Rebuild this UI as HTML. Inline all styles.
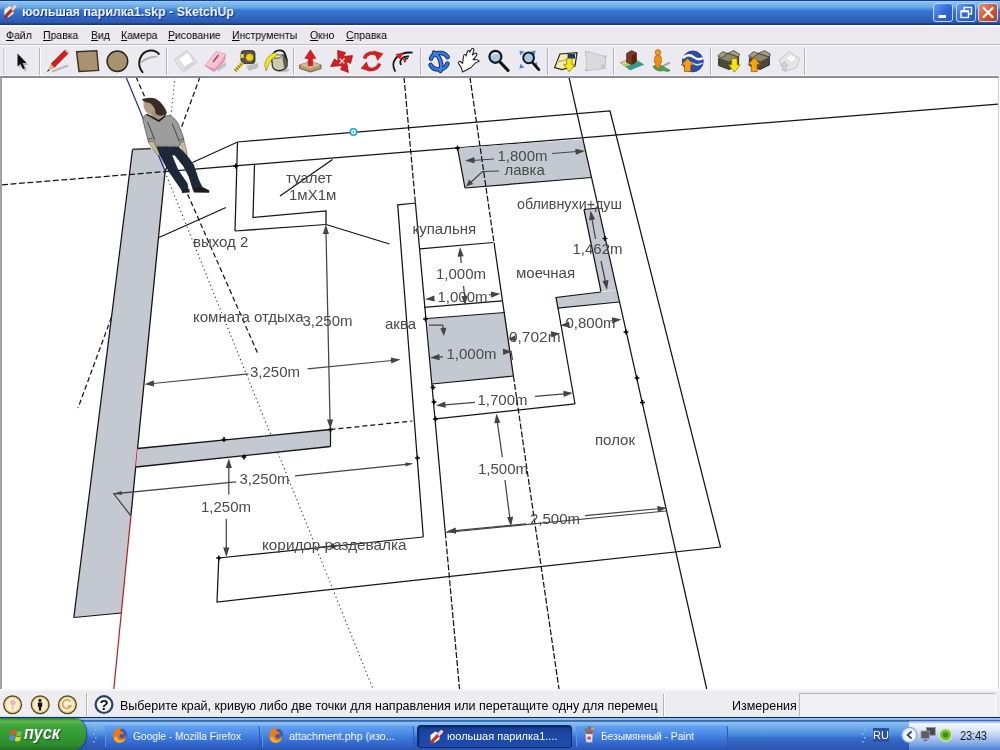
<!DOCTYPE html>
<html><head><meta charset="utf-8"><title>SketchUp</title>
<style>
*{box-sizing:border-box;margin:0;padding:0}
span,b,.ru{will-change:transform}
html,body{width:1000px;height:750px;overflow:hidden;background:#fff;font-family:"Liberation Sans",sans-serif}
#title{position:absolute;left:0;top:0;width:1000px;height:25px;background:linear-gradient(#14408c 0,#14408c 3%,#9acaff 5%,#88c0f0 9%,#78b4e6 20%,#64a4e6 30%,#4488dc 38%,#3478d0 44%,#3470c4 60%,#3060bc 76%,#2c58ae 92%,#183c84 95%,#163880 100%)}
#title .t{position:absolute;left:22px;top:4px;transform:scaleX(0.955);transform-origin:0 0;color:#fff;font-weight:bold;font-size:13px;text-shadow:1px 1px 1px #0a2a80;white-space:nowrap}
.wb{position:absolute;top:3px;width:20px;height:19px;border:1px solid #c4d6f6;border-radius:3px;background:linear-gradient(135deg,#6a9ef2,#2d66da 55%,#2358cc)}
#menu{position:absolute;left:0;top:25px;width:1000px;height:20px;background:#ece9ee;border-top:2px solid #fbfbfd;border-bottom:1px solid #bdbcc2;font-size:11px;color:#000}
#menu span{position:absolute;top:2px;white-space:nowrap;transform:scaleX(0.95);transform-origin:0 0}
#tool{position:absolute;left:0;top:45px;width:1000px;height:31px;background:#ebeaf0;border-top:1px solid #fff;border-bottom:1px solid #fafafc}
#canvas{position:absolute;left:0;top:76px;width:999px;height:613px;background:#fff;border-left:2px solid #a2a2a6;border-top:2px solid #8e8e92;border-right:1px solid #cfcfd3}
#status{position:absolute;left:0;top:689px;width:1000px;height:28px;background:#edecf1;border-top:2px solid #f6f5f9;font-size:12.5px;color:#000}
#status span{position:absolute;white-space:nowrap;top:8px}
#task{position:absolute;left:0;top:716px;width:1000px;height:34px;background:linear-gradient(#dfe6f2 0,#dfe6f2 1.5%,#0c2c5c 2.5%,#0c2c5c 4.4%,#98bce4 5%,#98bce4 10.5%,#3c6cb0 11.5%,#3c6cb0 16%,#88c0f4 17.5%,#84bcf2 23%,#7ab4ec 27%,#60a0e4 41%,#4888dc 56%,#3470cc 65%,#3060bc 80%,#2c54b0 100%)}
#start{position:absolute;left:0;top:2px;width:86px;height:32px;border-radius:0 12px 12px 0/0 16px 16px 0;background:linear-gradient(#2f7f2c 0,#5cba52 10%,#3ea43a 25%,#339a32 55%,#2c8c2c 85%,#236f22 100%);box-shadow:1px 0 2px #123a7c}
#start b{position:absolute;left:24px;top:4px;color:#fff;font-style:italic;font-size:19px;transform:scaleX(0.85);transform-origin:0 0;text-shadow:1px 1px 1px #1a4a18}
.tb{position:absolute;top:9px;height:23px;border-radius:3px;background:linear-gradient(#62a0ee 0,#4f8fe8 30%,#3c78da 60%,#2c5ec6 100%);border:1px solid #2c5cbc;border-top-color:#76acf2;border-left-color:#5c94e4;color:#fff;font-size:11px;white-space:nowrap;overflow:hidden}
.tb span{position:absolute;top:4px;transform-origin:0 0}
.tb.act{background:linear-gradient(#183c8c,#1c48a4 40%,#1e4cae);border-color:#102c70;box-shadow:inset 1px 1px 2px #0c2460}
#tray{position:absolute;left:909px;top:5px;width:91px;height:29px;background:linear-gradient(#7fa4e4 0,#f2f6fd 10%,#dfe9fa 30%,#b4ccf2 55%,#7ea6e6 80%,#4e82d8 100%);font-size:12px;color:#111}
</style></head><body>
<div id="title"><span class="t">юольшая парилка1.skp - SketchUp</span>
<div class="wb" style="left:933px"></div><div class="wb" style="left:956px"></div><div class="wb" style="left:978px;background:linear-gradient(135deg,#ea9070,#d4552c 55%,#b83a18)"></div>
</div>
<div id="menu"><span style="left:6px"><u>Ф</u>айл</span><span style="left:43px"><u>П</u>равка</span><span style="left:91px"><u>В</u>ид</span><span style="left:121px"><u>К</u>амера</span><span style="left:168px"><u>Р</u>исование</span><span style="left:232px"><u>И</u>нструменты</span><span style="left:310px"><u>О</u>кно</span><span style="left:346px"><u>С</u>правка</span></div>
<div id="tool"></div>
<div id="canvas"></div>
<div id="status"><span id="st1" style="left:120px;width:539px;overflow:hidden">Выберите край, кривую либо две точки для направления или перетащите одну для перемец</span><span id="st2" style="left:732px">Измерения</span>
<div style="position:absolute;left:663px;top:3px;width:2px;height:24px;border-left:1px solid #b4b3ba;border-right:1px solid #fff"></div>
<div style="position:absolute;left:799px;top:2px;width:197px;height:25px;background:#f1f0f4;border:1px solid #b9b8be;border-right-color:#fff;border-bottom-color:#fff"></div>
</div>
<div id="task">
<div id="start"><b>пуск</b></div>
<div class="tb" style="left:105px;width:155px"><span style="left:27px;transform:scaleX(0.93)">Google - Mozilla Firefox</span></div>
<div class="tb" style="left:262px;width:152px"><span style="left:26px;transform:scaleX(0.97)">attachment.php (изо...</span></div>
<div class="tb act" style="left:417px;width:155px"><span style="left:29px">юольшая парилка1....</span></div>
<div class="tb" style="left:576px;width:152px"><span style="left:24px;transform:scaleX(0.925)">Безымянный - Paint</span></div>
<div class="ru" style="position:absolute;left:873px;top:12px;width:16px;height:14px;background:#2c4fa8;color:#fff;font-size:11px;line-height:14px;text-align:center">RU</div>
<div id="tray"><span style="position:absolute;left:51px;top:8px;transform:scaleX(0.9);transform-origin:0 0">23:43</span></div>
</div>
<svg width="1000" height="750" viewBox="0 0 1000 750" style="position:absolute;left:0;top:0;will-change:transform" font-family="Liberation Sans, sans-serif">
<defs><clipPath id="cv"><rect x="2" y="78" width="996" height="611"/></clipPath></defs>
<g clip-path="url(#cv)">
<line x1="165.0" y1="172.0" x2="373.0" y2="689.0" stroke="#333" stroke-width="1.1" stroke-dasharray="1.2 3"/>
<line x1="175.0" y1="77.0" x2="165.0" y2="172.0" stroke="#444" stroke-width="1.1" stroke-dasharray="1.2 3"/>
<line x1="200.0" y1="77.0" x2="78.0" y2="408.0" stroke="#141414" stroke-width="1.25" stroke-dasharray="5 3"/>
<line x1="136.0" y1="77.0" x2="258.0" y2="354.0" stroke="#141414" stroke-width="1.25" stroke-dasharray="5 3"/>
<polygon points="132.5,149.5 163.0,149.0 165.0,172.0 121.3,613.0 73.8,617.5" fill="#c4c9d1"/>
<line x1="132.5" y1="149.5" x2="73.8" y2="617.5" stroke="#141414" stroke-width="1.25"/>
<line x1="73.8" y1="617.5" x2="121.3" y2="613.0" stroke="#141414" stroke-width="1.25"/>
<line x1="132.5" y1="149.3" x2="151.0" y2="148.6" stroke="#4a4a4a" stroke-width="1.8"/>
<line x1="165.0" y1="172.0" x2="137.6" y2="448.0" stroke="#141414" stroke-width="1.3"/>
<line x1="137.6" y1="448.0" x2="135.7" y2="467.0" stroke="#c01818" stroke-width="1.25"/>
<line x1="135.7" y1="467.0" x2="131.0" y2="515.0" stroke="#141414" stroke-width="1.3"/>
<line x1="131.0" y1="515.0" x2="113.8" y2="689.0" stroke="#c01818" stroke-width="1.2"/>
<line x1="126.0" y1="77.0" x2="165.0" y2="171.0" stroke="#1f2a8c" stroke-width="1.2"/>
<line x1="2.0" y1="184.8" x2="165.0" y2="171.6" stroke="#141414" stroke-width="1.25" stroke-dasharray="6 2.5"/>
<line x1="165.0" y1="171.6" x2="998.0" y2="104.0" stroke="#141414" stroke-width="1.25"/>
<polygon points="137.5,448.5 330.5,429.5 330.5,446.5 136.0,467.0" fill="#c4c9d1"/>
<line x1="137.5" y1="448.5" x2="330.5" y2="429.5" stroke="#141414" stroke-width="1.3"/>
<line x1="330.5" y1="429.5" x2="330.5" y2="446.5" stroke="#141414" stroke-width="1.25"/>
<line x1="330.5" y1="446.5" x2="136.0" y2="467.0" stroke="#141414" stroke-width="1.3"/>
<line x1="330.5" y1="429.5" x2="412.5" y2="421.0" stroke="#141414" stroke-width="1.25" stroke-dasharray="5 3"/>
<path d="M221.6 439.5h4.8M224.0 437.1v4.8" stroke="#000" stroke-width="1.5"/>
<path d="M241.6 457.0h4.8M244.0 454.6v4.8" stroke="#000" stroke-width="1.5"/>
<path d="M328.1 429.5h4.8M330.5 427.1v4.8" stroke="#000" stroke-width="1.5"/>
<polyline points="192.5,162.5 237.5,142.0 610.0,111.0 720.5,547.0 217.0,602.0 218.8,558.0 423.2,537.0" fill="none" stroke="#141414" stroke-width="1.25"/>
<line x1="237.5" y1="142.0" x2="235.0" y2="231.0" stroke="#141414" stroke-width="1.25"/>
<line x1="235.0" y1="231.0" x2="326.0" y2="224.5" stroke="#141414" stroke-width="1.25"/>
<line x1="326.0" y1="224.5" x2="389.5" y2="244.0" stroke="#141414" stroke-width="1.25"/>
<polyline points="254.5,164.5 253.0,217.5 326.0,211.0 326.0,224.5" fill="none" stroke="#141414" stroke-width="1.25"/>
<line x1="280.0" y1="196.0" x2="332.5" y2="159.5" stroke="#141414" stroke-width="1.25"/>
<line x1="159.0" y1="237.5" x2="226.0" y2="207.5" stroke="#141414" stroke-width="1.25"/>
<path d="M233.3 166.0h4.8M235.7 163.6v4.8" stroke="#000" stroke-width="1.5"/>
<circle cx="353.5" cy="132" r="3.2" fill="#fff" stroke="#18a8d8" stroke-width="1.6"/><circle cx="353.5" cy="132" r="0.9" fill="#18a8d8"/>
<polygon points="457.5,148.0 583.0,139.3 591.5,177.5 465.0,188.0" fill="#c4c9d1"/>
<line x1="457.5" y1="148.0" x2="465.0" y2="188.0" stroke="#141414" stroke-width="1.25"/>
<line x1="465.0" y1="188.0" x2="591.5" y2="177.5" stroke="#141414" stroke-width="1.25"/>
<path d="M455.1 148.0h4.8M457.5 145.6v4.8" stroke="#000" stroke-width="1.5"/>
<polygon points="584.0,209.5 598.0,208.0 616.5,290.0 601.0,291.5" fill="#c4c9d1"/>
<line x1="584.0" y1="209.5" x2="601.0" y2="291.5" stroke="#141414" stroke-width="1.25"/>
<line x1="584.0" y1="209.5" x2="598.0" y2="208.0" stroke="#141414" stroke-width="1.25"/>
<polygon points="556.0,297.5 616.5,290.3 619.0,302.0 558.0,308.0" fill="#c4c9d1"/>
<polyline points="601.0,292.0 556.0,297.5 558.0,308.0 619.0,302.0" fill="none" stroke="#141414" stroke-width="1.25"/>
<line x1="558.0" y1="308.0" x2="575.0" y2="404.0" stroke="#141414" stroke-width="1.25"/>
<polygon points="427.0,318.5 505.0,312.5 513.5,376.0 432.0,384.0" fill="#c4c9d1"/>
<line x1="427.0" y1="318.5" x2="505.0" y2="312.5" stroke="#141414" stroke-width="1.25"/>
<line x1="432.0" y1="384.0" x2="513.5" y2="376.0" stroke="#141414" stroke-width="1.25"/>
<path d="M423.1 319.0h4.8M425.5 316.6v4.8" stroke="#000" stroke-width="1.5"/>
<line x1="404.0" y1="77.0" x2="415.4" y2="203.0" stroke="#141414" stroke-width="1.25" stroke-dasharray="6 2"/>
<line x1="415.4" y1="203.0" x2="445.3" y2="532.5" stroke="#141414" stroke-width="1.25"/>
<line x1="445.3" y1="532.5" x2="459.5" y2="689.0" stroke="#141414" stroke-width="1.25" stroke-dasharray="6 2"/>
<line x1="469.9" y1="77.0" x2="494.0" y2="242.5" stroke="#141414" stroke-width="1.25" stroke-dasharray="6 2"/>
<line x1="494.0" y1="242.5" x2="513.4" y2="376.0" stroke="#141414" stroke-width="1.25"/>
<line x1="513.4" y1="376.0" x2="559.0" y2="689.0" stroke="#141414" stroke-width="1.25" stroke-dasharray="6 2"/>
<line x1="568.9" y1="77.0" x2="706.7" y2="689.0" stroke="#141414" stroke-width="1.25"/>
<path d="M602.6 238.5h4.8M605.0 236.1v4.8" stroke="#000" stroke-width="1.5"/>
<path d="M623.6 332.0h4.8M626.0 329.6v4.8" stroke="#000" stroke-width="1.5"/>
<path d="M634.6 378.0h4.8M637.0 375.6v4.8" stroke="#000" stroke-width="1.5"/>
<path d="M640.1 402.5h4.8M642.5 400.1v4.8" stroke="#000" stroke-width="1.5"/>
<polyline points="416.0,203.0 397.7,204.8 423.3,537.0" fill="none" stroke="#141414" stroke-width="1.25"/>
<path d="M415.1 458.0h4.8M417.5 455.6v4.8" stroke="#000" stroke-width="1.5"/>
<line x1="420.0" y1="248.8" x2="493.0" y2="242.5" stroke="#141414" stroke-width="1.25"/>
<line x1="424.0" y1="307.4" x2="502.0" y2="300.8" stroke="#141414" stroke-width="1.25"/>
<line x1="435.5" y1="418.8" x2="575.0" y2="403.8" stroke="#141414" stroke-width="1.25"/>
<path d="M430.6 387.5h4.8M433.0 385.1v4.8" stroke="#000" stroke-width="1.5"/>
<path d="M431.6 402.0h4.8M434.0 399.6v4.8" stroke="#000" stroke-width="1.5"/>
<path d="M433.1 419.0h4.8M435.5 416.6v4.8" stroke="#000" stroke-width="1.5"/>
<polygon points="465.0,160.8 474.3,157.0 474.7,163.2" fill="#444"/>
<line x1="472.0" y1="160.5" x2="494.0" y2="159.0" stroke="#444" stroke-width="1.25"/>
<line x1="552.0" y1="153.5" x2="577.0" y2="151.5" stroke="#444" stroke-width="1.25"/>
<polygon points="585.0,151.0 575.8,154.8 575.3,148.7" fill="#444"/>
<text x="497.5" y="161" font-size="15" fill="#4a4a4a">1,800m</text>
<polyline points="499.0,171.0 482.5,171.5 470.0,183.0" fill="none" stroke="#444" stroke-width="1.25"/>
<polygon points="466.0,186.5 469.1,179.5 473.3,184.1" fill="#444"/>
<text x="504.5" y="175" font-size="15" fill="#4a4a4a">лавка</text>
<polygon points="590.5,210.5 595.2,219.3 589.1,220.4" fill="#444"/>
<line x1="592.0" y1="219.0" x2="595.5" y2="239.0" stroke="#444" stroke-width="1.25"/>
<line x1="601.0" y1="261.0" x2="605.5" y2="282.0" stroke="#444" stroke-width="1.25"/>
<polygon points="607.0,290.0 602.4,281.1 608.5,280.1" fill="#444"/>
<text x="572.5" y="254" font-size="15" fill="#4a4a4a">1,462m</text>
<polygon points="560.0,325.5 569.1,321.5 569.8,327.6" fill="#444"/>
<polygon points="621.5,319.5 612.3,323.5 611.8,317.3" fill="#444"/>
<text x="565.5" y="328" font-size="15" fill="#4a4a4a">0,800m</text>
<polygon points="508.5,339.0 515.2,335.3 515.7,341.5" fill="#444"/>
<polygon points="560.5,333.5 551.3,337.5 550.7,331.3" fill="#444"/>
<text x="509" y="342.3" font-size="15" fill="#4a4a4a" textLength="51.5" lengthAdjust="spacingAndGlyphs">0,702m</text>
<polygon points="460.0,247.0 463.7,256.3 457.5,256.7" fill="#444"/>
<line x1="460.6" y1="255.0" x2="461.2" y2="263.0" stroke="#444" stroke-width="1.25"/>
<line x1="463.5" y1="286.0" x2="464.8" y2="297.0" stroke="#444" stroke-width="1.25"/>
<polygon points="465.2,305.5 461.4,296.3 467.6,295.8" fill="#444"/>
<text x="436" y="278.75" font-size="15" fill="#4a4a4a">1,000m</text>
<polygon points="425.0,299.3 434.2,295.4 434.7,301.6" fill="#444"/>
<polygon points="500.5,293.8 491.3,297.7 490.8,291.5" fill="#444"/>
<line x1="489.0" y1="294.8" x2="492.0" y2="294.5" stroke="#444" stroke-width="1.25"/>
<text x="437.5" y="302" font-size="15" fill="#4a4a4a">1,000m</text>
<polyline points="429.0,325.0 442.5,325.0 443.3,328.0" fill="none" stroke="#444" stroke-width="1.25"/>
<polygon points="444.0,336.0 440.2,328.3 446.4,327.8" fill="#444"/>
<polygon points="430.0,357.8 439.3,354.1 439.7,360.3" fill="#444"/>
<line x1="438.0" y1="357.2" x2="443.0" y2="356.8" stroke="#444" stroke-width="1.25"/>
<polygon points="512.5,351.3 503.2,354.9 502.8,348.7" fill="#444"/>
<line x1="511.0" y1="351.0" x2="512.5" y2="360.0" stroke="#444" stroke-width="1.25"/>
<text x="446.5" y="359.3" font-size="15" fill="#4a4a4a">1,000m</text>
<text x="385" y="328.75" font-size="15" fill="#4a4a4a">аква</text>
<polygon points="436.0,405.5 445.2,401.6 445.7,407.8" fill="#444"/>
<line x1="445.0" y1="404.8" x2="475.0" y2="402.3" stroke="#444" stroke-width="1.25"/>
<line x1="535.0" y1="396.3" x2="564.0" y2="393.8" stroke="#444" stroke-width="1.25"/>
<polygon points="573.0,393.0 563.8,396.9 563.3,390.8" fill="#444"/>
<text x="477.5" y="404.5" font-size="15" fill="#4a4a4a">1,700m</text>
<polygon points="496.5,413.5 500.4,422.7 494.3,423.2" fill="#444"/>
<line x1="497.3" y1="422.0" x2="502.3" y2="457.0" stroke="#444" stroke-width="1.25"/>
<line x1="505.0" y1="480.0" x2="509.8" y2="518.0" stroke="#444" stroke-width="1.25"/>
<polygon points="511.0,526.5 507.1,517.3 513.2,516.8" fill="#444"/>
<text x="478" y="474.3" font-size="15" fill="#4a4a4a">1,500m</text>
<line x1="446.0" y1="532.5" x2="666.0" y2="511.0" stroke="#444" stroke-width="1.25"/>
<line x1="585.0" y1="515.7" x2="666.0" y2="508.0" stroke="#444" stroke-width="1.25"/>
<polygon points="446.5,531.5 455.7,527.5 456.2,533.7" fill="#444"/>
<line x1="455.0" y1="530.7" x2="526.0" y2="523.8" stroke="#444" stroke-width="1.25"/>
<polygon points="667.0,508.0 657.9,512.0 657.2,505.9" fill="#444"/>
<text x="530" y="523.75" font-size="15" fill="#4a4a4a">2,500m</text>
<polygon points="325.8,224.5 329.0,234.0 322.8,234.0" fill="#444"/>
<line x1="326.0" y1="232.0" x2="330.0" y2="420.0" stroke="#444" stroke-width="1.25"/>
<polygon points="330.3,429.0 327.0,419.6 333.2,419.4" fill="#444"/>
<text x="302.5" y="325.5" font-size="15" fill="#4a4a4a">3,250m</text>
<polygon points="144.5,384.3 153.7,380.3 154.3,386.5" fill="#444"/>
<line x1="153.0" y1="383.5" x2="248.5" y2="373.8" stroke="#444" stroke-width="1.25"/>
<line x1="307.5" y1="368.8" x2="392.0" y2="360.5" stroke="#444" stroke-width="1.25"/>
<polygon points="400.5,359.6 391.3,363.6 390.7,357.4" fill="#444"/>
<text x="250" y="377" font-size="15" fill="#4a4a4a">3,250m</text>
<polyline points="131.0,516.0 113.8,493.8 236.0,481.8" fill="none" stroke="#444" stroke-width="1.25"/>
<polygon points="113.8,493.8 121.5,491.0 121.9,494.9" fill="#444"/>
<line x1="295.0" y1="475.8" x2="406.0" y2="464.3" stroke="#444" stroke-width="1.25"/>
<polygon points="413.5,463.6 405.7,466.4 405.3,462.4" fill="#444"/>
<text x="239.5" y="484" font-size="15" fill="#4a4a4a">3,250m</text>
<polygon points="228.8,458.5 231.9,468.0 225.7,468.0" fill="#444"/>
<line x1="228.8" y1="466.0" x2="228.8" y2="494.5" stroke="#444" stroke-width="1.25"/>
<line x1="226.3" y1="519.0" x2="226.3" y2="549.0" stroke="#444" stroke-width="1.25"/>
<polygon points="226.3,557.0 223.2,547.5 229.4,547.5" fill="#444"/>
<text x="201" y="512" font-size="15" fill="#4a4a4a">1,250m</text>
<path d="M216.3 558.0h4.8M218.8 555.6v4.8" stroke="#000" stroke-width="1.5"/>
<path d="M330.6 546.0h4.8M333.0 543.6v4.8" stroke="#000" stroke-width="1.5"/>
<line x1="318.0" y1="547.3" x2="340.0" y2="545.0" stroke="#444" stroke-width="1.25"/>
<text x="286" y="183" font-size="15" fill="#4a4a4a">туалет</text>
<text x="289" y="200" font-size="15" fill="#4a4a4a">1мХ1м</text>
<text x="193" y="246.5" font-size="15" fill="#4a4a4a">выход 2</text>
<text x="193" y="322" font-size="15" fill="#4a4a4a">комната отдыха</text>
<text x="262" y="550" font-size="15" fill="#4a4a4a" textLength="144.5" lengthAdjust="spacingAndGlyphs">коридор раздевалка</text>
<text x="412.5" y="233.75" font-size="15" fill="#4a4a4a">купальня</text>
<text x="517" y="209" font-size="15" fill="#4a4a4a" textLength="105" lengthAdjust="spacingAndGlyphs">обливнухи+душ</text>
<text x="516" y="277.5" font-size="15" fill="#4a4a4a">моечная</text>
<text x="595" y="445" font-size="15" fill="#4a4a4a">полок</text>
<path d="M143.4 101.5L148 100l5 3 3.5 9-1.5 3.5-5-1-4-2.5-2.4-5z" fill="#b39c84"/>
<path d="M152 111l6 1 5 4-4.5 5-7.5-5.5z" fill="#a8927a"/>
<path d="M141.8 99.6C145 97.6 151 97 155 98.6C160 100.6 165 107 166.8 112.4C166.4 114.6 165 115.8 163.6 115.6C160 116.4 157 115 155.4 113.6C155.8 110 153.6 105.4 149.6 103C146.6 102.6 143.6 102.2 141.8 99.6Z" fill="#3a2c24"/>
<path d="M145.2 115L147.4 114.4L158.8 120.6L165 116L170 115.6C174 117.6 177 121 178.6 125L182.8 135.4L184.2 141.6L180.4 142.6L179.4 146.4L155.6 146.2L153.8 141.2L148.6 142.4L145.8 132L142.8 119.6Z" fill="#9d9d9b" stroke="#4a4a4a" stroke-width="0.7" stroke-linejoin="round" stroke-linecap="round"/>
<path d="M147.2 114.6L158.8 121L165 116.2" fill="none" stroke="#1c1c1c" stroke-width="1.6" stroke-linejoin="round" stroke-linecap="round"/>
<path d="M147.8 122.4L154.6 139.4M172.4 124L179.2 141" fill="none" stroke="#3a3a3a" stroke-width="0.9" stroke-linejoin="round" stroke-linecap="round"/>
<path d="M148 139.4l5.4-1.6M179.6 140l4.2-1.2" fill="none" stroke="#555" stroke-width="0.8" stroke-linejoin="round" stroke-linecap="round"/>
<path d="M148.6 142.2L153.6 141L157.6 149.4L160.4 155L158 155.6L153 149Z" fill="#c9ba96" stroke="#5a5038" stroke-width="0.5" stroke-linejoin="round" stroke-linecap="round"/>
<path d="M180.2 142.6L184.2 141.6L187 152L187 156L184.6 155L182.6 150Z" fill="#c9ba96" stroke="#5a5038" stroke-width="0.5" stroke-linejoin="round" stroke-linecap="round"/>
<path d="M156.4 146.6L179 147L186.8 155L193.8 164.6L199 180L202.6 187.2L193 190.6L188.6 176.6L183.4 166.4L174.8 155.6L172.2 155.2L178.2 169.8L187.6 183.6L188.6 190.6L181.6 190.6L168.6 171.4L160 155.8Z" fill="#1d2838"/>
<path d="M181.4 189.4L189.4 189L189.6 192.6L182 193Z" fill="#222"/>
<path d="M192.8 189L202.6 187L209.4 190.4L209 192.8L194 192.4Z" fill="#1a1a1a"/>
</g></svg>
<svg width="1000" height="750" viewBox="0 0 1000 750" style="position:absolute;left:0;top:0">
<path d="M4 48v27" stroke="#b4b3ba" stroke-width="1"/><path d="M5 48v27" stroke="#fbfbfd" stroke-width="1"/>
<path d="M39.5 48v27" stroke="#b4b3ba" stroke-width="1"/><path d="M40.5 48v27" stroke="#fbfbfd" stroke-width="1"/>
<path d="M166.5 48v27" stroke="#b4b3ba" stroke-width="1"/><path d="M167.5 48v27" stroke="#fbfbfd" stroke-width="1"/>
<path d="M293.5 48v27" stroke="#b4b3ba" stroke-width="1"/><path d="M294.5 48v27" stroke="#fbfbfd" stroke-width="1"/>
<path d="M420.5 48v27" stroke="#b4b3ba" stroke-width="1"/><path d="M421.5 48v27" stroke="#fbfbfd" stroke-width="1"/>
<path d="M547.5 48v27" stroke="#b4b3ba" stroke-width="1"/><path d="M548.5 48v27" stroke="#fbfbfd" stroke-width="1"/>
<path d="M613.5 48v27" stroke="#b4b3ba" stroke-width="1"/><path d="M614.5 48v27" stroke="#fbfbfd" stroke-width="1"/>
<path d="M710.5 48v27" stroke="#b4b3ba" stroke-width="1"/><path d="M711.5 48v27" stroke="#fbfbfd" stroke-width="1"/>
<path d="M804.5 48v27" stroke="#b4b3ba" stroke-width="1"/><path d="M805.5 48v27" stroke="#fbfbfd" stroke-width="1"/>
<path d="M19.5 55.5v13l3-2.6 2.4 5.3 2-0.9-2.4-5.2h4z" fill="#b8b8bc"/>
<path d="M17.5 53.5v13l3-2.6 2.4 5.3 2-0.9-2.4-5.2h4z" fill="#111"/>
<path d="M52 71.5l16-6" stroke="#b9b9bd" stroke-width="2"/>
<polygon points="51,64 54.2,67.6 68,53.6 64.6,50.2" fill="#d41a1a" stroke="#8a1010" stroke-width="0.6"/>
<polygon points="64.6,50.2 68,53.6 69.3,52 66,48.8" fill="#e9b4b4"/>
<polygon points="51,64 54.2,67.6 46.8,72" fill="#d8b48e"/><polygon points="48.6,69.6 49.6,70.6 46.8,72" fill="#222"/>
<polygon points="76.6,51.8 96.8,50.8 98.6,70.4 79,71.4" fill="#a9926f" stroke="#3a3020" stroke-width="1.4"/>
<circle cx="117.4" cy="61.2" r="10.3" fill="#a9926f" stroke="#2a2620" stroke-width="1.5"/>
<path d="M141 62.8Q146 57 157 56.6" fill="none" stroke="#b0b0b4" stroke-width="1.6"/>
<path d="M143 72.8C135.5 64 140 52 150 50.6C154 50.2 157.5 52 159.3 54.6" fill="none" stroke="#1a1a1a" stroke-width="2"/>
<polygon points="173.8,60 187,50.6 197,62 183.6,72" fill="#e2e2e4" stroke="#c9c9cc" stroke-width="1"/>
<polygon points="178.8,58.4 188,52.6 193.6,61.4 184.4,67.2" fill="#ffffff" stroke="#d0d0d4" stroke-width="0.8"/>
<polygon points="184.4,67.2 193.6,61.4 193.8,64.6 184.8,70.2" fill="#d4d4d8"/>
<polygon points="216,68 226,62 226,66 218,71.5" fill="#c4c4c8"/>
<polygon points="205,65.6 216,51.6 225.6,54.4 223.8,61.6 214.2,71.4" fill="#f4a0b8" stroke="#c06880" stroke-width="0.7"/>
<polygon points="205,65.6 216,51.6 225.6,54.4 215,68" fill="#f9c4d2"/>
<path d="M213 62l5.5-7" stroke="#a04860" stroke-width="1.6"/>
<polygon points="246,66 258,63 258,68 249,71" fill="#c0c0c4"/>
<rect x="241" y="50.6" width="14" height="13" rx="3.2" fill="#54524c" stroke="#222" stroke-width="0.8"/>
<circle cx="249.6" cy="57.4" r="3.9" fill="#f2cf1c" stroke="#6a5a10" stroke-width="0.6"/>
<path d="M243 62.4l-8 8.4" stroke="#e8c81c" stroke-width="3.2"/><path d="M243 62.4l-8 8.4" stroke="#6a5a10" stroke-width="3.2" stroke-dasharray="0.7 2"/>
<rect x="240.8" y="54" width="3" height="4" fill="#f2cf1c"/>
<ellipse cx="282" cy="70" rx="7.6" ry="2.2" fill="#bcbcc0"/>
<path d="M273 54.4C275 49.4 283.4 48.6 285 54L287 60.6" fill="none" stroke="#141414" stroke-width="1.8"/>
<path d="M271.6 57.6L283.4 55L287.2 60.4L287 66.4Q284 70.8 278.2 70.6Q273.6 70 272.4 66.4Z" fill="#ccc9b0" stroke="#24241e" stroke-width="1.2" stroke-linejoin="round"/>
<path d="M283.4 55L287.2 60.4L287 66.4L284.4 69.4L282.6 58.4Z" fill="#5c5a4e"/>
<path d="M271.6 57.6Q277 53.4 283.4 55Q279.4 59.8 271.6 57.6Z" fill="#e6e2c6" stroke="#24241e" stroke-width="0.7"/>
<path d="M275 52.6C269 54.6 265 60 264.8 65.6l1.4 5.4 2.2-5.8c1.4-4 3.6-6.4 6.2-8l3-2.6z" fill="#f4e61e" stroke="#7c7610" stroke-width="0.6"/>
<polygon points="299.6,65 310.6,61.6 321,65 321,68.6 310.4,72 299.6,68.4" fill="#b49a72" stroke="#54452c" stroke-width="0.8"/>
<polygon points="299.6,65 310.6,61.6 321,65 310.4,68.4" fill="#d2bc94"/>
<path d="M310.4 49.8l5.6 8.6h-3.4v7.4h-4.4v-7.4h-3.4z" fill="#e01818" stroke="#901010" stroke-width="0.5"/>
<polygon points="337.6,50.4 345.6,52.6 343.4,56.4 352.6,55.6 350.6,63.4 346.6,61.6 348.4,72.4 340.6,69.6 342.4,65.6 330.6,66.6 334.4,59 338,61.2" fill="#d81c1c" stroke="#7c0c0c" stroke-width="0.6" stroke-linejoin="round"/>
<path d="M339.6 58.6l4.8 4.8M344.6 58.4l-5 5.2" stroke="#fff" stroke-width="1.3"/>
<g fill="none" stroke="#d42020" stroke-width="3.4"><path d="M364.4 58.6A8.2 8.2 0 0 1 377.6 55"/><path d="M379.6 63.6A8.2 8.2 0 0 1 366.2 67.2"/></g>
<polygon points="373.6,50.6 383.4,53.6 377.4,61" fill="#d42020"/><polygon points="370.4,71.8 360.6,68.6 366.6,61.4" fill="#d42020"/>
<g fill="none" stroke="#161616" stroke-width="1.8"><path d="M395.4 71.6C389.6 62 397 51.6 412.6 52.6"/><path d="M401 65C398.6 59.6 403.4 55.8 409 56.4"/></g>
<path d="M405.4 61.6C403.6 58.6 406 57.6 408 58.6" fill="none" stroke="#161616" stroke-width="1.2"/>
<polygon points="395.4,54 403.4,53 400,59.6" fill="#e01818"/><polygon points="402.4,58.4 407,59 404.6,63" fill="#e01818"/>
<g fill="none" stroke-linecap="round"><path d="M431 58.6C433 52.4 443.6 50.6 447.6 57" stroke="#1c2c54" stroke-width="4.6"/><path d="M447.4 63.6C445 70.6 434.6 71.6 430.6 65" stroke="#1c2c54" stroke-width="4.6"/><path d="M434 52.6C440 57 442.6 63 440.4 71" stroke="#1c2c54" stroke-width="4.4"/><path d="M431 58.6C433 52.4 443.6 50.6 447.6 57" stroke="#2f78e6" stroke-width="2.8"/><path d="M447.4 63.6C445 70.6 434.6 71.6 430.6 65" stroke="#2f78e6" stroke-width="2.8"/><path d="M434 52.6C440 57 442.6 63 440.4 71" stroke="#3b86f0" stroke-width="2.4"/></g>
<path d="M462.6 72l-1.4-4.6-2.6-3.8c-1-1.8 1-3 2.4-1.6l1.6 1.4 1-7.6c0.4-1.8 2.6-1.6 2.6 0.2l1-4.2c0.6-1.8 2.8-1.4 2.6 0.4l1.6-3c1-1.4 3-0.6 2.4 1.2l-1.4 4.6 2.6-1.6c1.4-0.8 2.6 0.8 1.6 2l-3.6 4.4c2.6-0.6 5.6 0.2 6.2 1.4-2.4 0.6-4.2 1.6-5.6 3.6-1.6 2.4-3.6 4-6 4.6z" fill="#fff" stroke="#26262a" stroke-width="1.1" stroke-linejoin="round"/>
<path d="M500 62l8 8.4" stroke="#101010" stroke-width="3" stroke-linecap="round"/>
<circle cx="495.4" cy="56.8" r="6" fill="#a9c9e2" stroke="#18181c" stroke-width="2.2"/>
<path d="M492 55.4a4 3 0 0 1 6-1.6" stroke="#e6f2fa" stroke-width="1.2" fill="none"/>
<g fill="#4a86d8"><polygon points="519.4,50.6 524.4,51.6 520.4,55.4"/><polygon points="535.6,50.6 530.6,51.6 534.6,55.4"/><polygon points="519.4,68.6 524.4,67.6 520.4,63.8"/><polygon points="537,62 537.6,66.6 533.4,64.4"/></g>
<path d="M532.6 62.6l6.2 7" stroke="#101010" stroke-width="2.8" stroke-linecap="round"/>
<circle cx="528.6" cy="57.8" r="5.4" fill="#a9c9e2" stroke="#18181c" stroke-width="2"/>
<polygon points="554.6,67.6 560,54 577,52.6 575,66 562,69.6" fill="#f4ecb0" stroke="#26261c" stroke-width="1.2"/>
<rect x="567.6" y="54" width="7.4" height="4.6" fill="#1c3468"/>
<path d="M557 62c4-1.6 6-1 9-2" stroke="#c8b860" stroke-width="1.4" fill="none"/>
<path d="M566.6 58.4h5.4v6h3l-5.7 7.4-5.7-7.4h3z" fill="#f6e610" stroke="#7a7208" stroke-width="0.7"/>
<polygon points="585.4,51 605.6,56.6 605,68.6 587,70.6" fill="#dadadc" stroke="#c2c2c6" stroke-width="1"/><rect x="601" y="64.6" width="4.4" height="4" fill="#c6c6ca"/><circle cx="586" cy="70" r="1.3" fill="#bbb"/><circle cx="605.4" cy="56.6" r="1.3" fill="#bbb"/>
<polygon points="620.4,62.6 634,58 643.6,64.6 630,70" fill="#e4d890" stroke="#6a6a40" stroke-width="0.6"/>
<polygon points="625.6,66.4 638.6,61.4 643.6,64.6 630,70" fill="#2c9c94"/><polygon points="623,64.4 636,59.4 638.6,61.4 625.6,66.4" fill="#b4cc58"/>
<polygon points="626.6,53.4 631.6,50.6 636.4,52.8 636.4,62 631.6,64.6 626.6,62.2" fill="#7c3a24" stroke="#3c1a0c" stroke-width="0.6"/><polygon points="631.6,55.4 636.4,52.8 636.4,62 631.6,64.6" fill="#5a2614"/>
<path d="M661 67l9-4.4" stroke="#a8a8ac" stroke-width="2.2"/>
<path d="M652.8 66.6c3-2 8-2 10 0l7.4 3.6c-1 1.6-4 1.4-6.4 0.4-4 1-8.4 0.4-11-4z" fill="#48a44c" stroke="#246428" stroke-width="0.5"/>
<circle cx="658" cy="52.4" r="2.9" fill="#ee9a1a" stroke="#9a5808" stroke-width="0.5"/>
<path d="M654.8 57c0-2.2 6.4-2.2 6.4 0l0.6 5.6-1.2 0.2-0.6 5c-0.8 0.6-3.2 0.6-4 0l-0.6-5-1.2-0.2z" fill="#ee8c12" stroke="#9a5808" stroke-width="0.5"/>
<circle cx="692.8" cy="61.4" r="10.4" fill="#2c4cae" stroke="#142868" stroke-width="0.8"/>
<path d="M683 58c4-3.6 8-3 11-0.6 3 2.2 6 2.4 8.8 0.6" stroke="#fff" stroke-width="2.4" fill="none"/><path d="M683.4 63.6c4-2.6 7-2 10 0 3 1.8 6 1.6 9-0.4" stroke="#cfe0f6" stroke-width="1.6" fill="none"/>
<path d="M687.6 58.6l6.4 6.4h-3.2v6.4h-6.4v-6.4h-3.2z" fill="#f6a212" stroke="#8a4c04" stroke-width="0.7"/>
<polygon points="718.6,58 727.6,53.4 738.6,57 738.6,65 729.2,69.6 718.6,65.6" fill="#4c4838" stroke="#1c1a12" stroke-width="0.8"/>
<polygon points="718.6,58 727.6,53.4 738.6,57 729.2,61.6" fill="#8c866c"/>
<polygon points="717.6,56 722.6,51.6 727.6,53.4 721.6,58" fill="#a69e80" stroke="#1c1a12" stroke-width="0.6"/><polygon points="727.6,53.4 733.6,50.6 739.6,54 738.6,57" fill="#a69e80" stroke="#1c1a12" stroke-width="0.6"/>
<path d="M731.6 58.4h5.6v6.4h3l-5.8 7.4-5.8-7.4h3z" fill="#f6e610" stroke="#7a7208" stroke-width="0.7"/>
<polygon points="749.4,58 758.4,53.4 769.4,57 769.4,65 760.0,69.6 749.4,65.6" fill="#4c4838" stroke="#1c1a12" stroke-width="0.8"/>
<polygon points="749.4,58 758.4,53.4 769.4,57 760.0,61.6" fill="#8c866c"/>
<polygon points="748.4,56 753.4,51.6 758.4,53.4 752.4,58" fill="#a69e80" stroke="#1c1a12" stroke-width="0.6"/><polygon points="758.4,53.4 764.4,50.6 770.4,54 769.4,57" fill="#a69e80" stroke="#1c1a12" stroke-width="0.6"/>
<path d="M754.2 57.6l6.2 6.8h-3.2v7.2h-6v-7.2h-3.2z" fill="#f6a212" stroke="#8a4c04" stroke-width="0.7"/>
<polygon points="779,60 789,51.6 800,58.6 796,68 784.6,71.4" fill="#e6e6e8" stroke="#c6c6ca" stroke-width="1"/><polygon points="786,58.6 791,54 796.6,58.6 791.6,62.6" fill="#fff" stroke="#d0d0d4" stroke-width="0.7"/><path d="M784.4 61.4l4 4.2h-2v5h-4v-5h-2z" fill="#d2d2d6" stroke="#b4b4b8" stroke-width="0.6"/>
<circle cx="12.6" cy="704.8" r="8.8" fill="#f8edcc" stroke="#5e4a14" stroke-width="1.5"/><circle cx="12.6" cy="704.8" r="7.4" fill="none" stroke="#e4cf90" stroke-width="1"/><circle cx="12.8" cy="702.6" r="2.7" fill="#f0b4bc"/><path d="M12.6 705v5" stroke="#d8c4a8" stroke-width="1.4"/>
<circle cx="40.2" cy="704.8" r="8.8" fill="#f8edcc" stroke="#5e4a14" stroke-width="1.5"/><circle cx="40.2" cy="704.8" r="7.4" fill="none" stroke="#e4cf90" stroke-width="1"/><circle cx="40" cy="700.4" r="1.6" fill="#111"/><path d="M37.8 702.6h4.4v4.2h-1v3.8h-2.4v-3.8h-1z" fill="#111"/>
<circle cx="67.4" cy="704.8" r="8.8" fill="#f8edcc" stroke="#5e4a14" stroke-width="1.5"/><circle cx="67.4" cy="704.8" r="7.4" fill="none" stroke="#e4cf90" stroke-width="1"/><path d="M70.6 701.6a4.4 4.4 0 1 0 0.4 4.4h-3.4" fill="none" stroke="#c4a060" stroke-width="1.5"/>
<path d="M86.5 693v23" stroke="#b4b3ba"/><path d="M87.5 693v23" stroke="#fff"/>
<circle cx="104" cy="704.6" r="8.4" fill="#f4f6f8" stroke="#27425e" stroke-width="2.2"/>
<text x="104" y="710" font-size="15" font-weight="bold" text-anchor="middle" fill="#111" font-family="Liberation Sans, sans-serif">?</text>
<path d="M4.4 9.6l4.6-3.4 4 1.6 0.4 6-5 3.4-4-2z" fill="#f4f0ec" stroke="#c8b8a8" stroke-width="0.5"/>
<path d="M5.6 16.4l9.6-10" stroke="#b4301c" stroke-width="3.2" stroke-linecap="round"/><path d="M12.8 8.8l2.4-2.4" stroke="#f0d4c8" stroke-width="3.2" stroke-linecap="round"/><path d="M4.6 17.4l1.6-0.6-1-1z" fill="#402010"/>
<rect x="938.5" y="15" width="7.5" height="3" fill="#fff"/>
<rect x="964" y="7.5" width="7.5" height="6.5" fill="none" stroke="#fff" stroke-width="1.4"/><rect x="961" y="11" width="7.5" height="6.5" fill="#2f67da" stroke="#fff" stroke-width="1.4"/><path d="M961 11.4h7.5" stroke="#fff" stroke-width="2"/>
<path d="M983.6 8l9 9M992.6 8l-9 9" stroke="#fff" stroke-width="2.2" stroke-linecap="round"/>
<g transform="translate(10,729)"><path d="M1 1.6c2-1.2 3.6-0.8 5.2 0l-1 4.4c-1.6-0.8-3.2-1-5.2 0z" fill="#e8542c"/><path d="M7 2c1.6 0.8 3.4 0.8 5.2 0l-1 4.4c-1.8 0.8-3.6 0.8-5.2 0z" fill="#78c048"/><path d="M-0.2 7c2-1 3.6-0.8 5.2 0l-1 4.4c-1.6-0.8-3.2-1-5.2 0z" fill="#4c8cf0"/><path d="M5.8 7.4c1.6 0.8 3.4 0.8 5.2 0l-1 4.4c-1.8 0.8-3.6 0.8-5.2 0z" fill="#f4cc30"/></g>
<circle cx="120.5" cy="735" r="6.6" fill="#3a5cb8"/><path d="M113.3 736.6c-0.6-6.4 4.8-9.8 9.4-8 -2 0.4-2.6 1.2-2.8 2.2 2.4 0.2 3.8 1.8 3.8 4 -1.4-1.4-3.2-1-4.2 0.4 -0.8 1.4 0 3 1.8 3.2 2 0.2 3.8-1 4.4-3.4 0.8 5.4-3 8.2-6.8 8 -3.6-0.2-5.4-3-5.6-6.4z" fill="#ee7a14"/><path d="M113.9 737.4c0.4 3.2 2.6 5 5.4 5.2 3.2 0.2 5.8-1.6 6.6-5 -1 2.2-3 3.2-5 3 -2.6-0.2-4-2-3.6-4.2 -1.2 0.6-2.6 0.8-3.4 1z" fill="#f8b428"/>
<circle cx="276.6" cy="735" r="6.6" fill="#3a5cb8"/><path d="M269.40000000000003 736.6c-0.6-6.4 4.8-9.8 9.4-8 -2 0.4-2.6 1.2-2.8 2.2 2.4 0.2 3.8 1.8 3.8 4 -1.4-1.4-3.2-1-4.2 0.4 -0.8 1.4 0 3 1.8 3.2 2 0.2 3.8-1 4.4-3.4 0.8 5.4-3 8.2-6.8 8 -3.6-0.2-5.4-3-5.6-6.4z" fill="#ee7a14"/><path d="M270.0 737.4c0.4 3.2 2.6 5 5.4 5.2 3.2 0.2 5.8-1.6 6.6-5 -1 2.2-3 3.2-5 3 -2.6-0.2-4-2-3.6-4.2 -1.2 0.6-2.6 0.8-3.4 1z" fill="#f8b428"/>
<g transform="translate(426,725.2) scale(1.02)"><path d="M4.4 9.6l4.6-3.4 4 1.6 0.4 6-5 3.4-4-2z" fill="#f4f0ec"/><path d="M5.6 16.4l9.6-10" stroke="#c43820" stroke-width="3.2" stroke-linecap="round"/><path d="M12.8 8.8l2.4-2.4" stroke="#f0d4c8" stroke-width="3.2" stroke-linecap="round"/></g>
<path d="M585.4 733.6h7.6l-0.8 8.6h-6z" fill="#e8e8f0" stroke="#8890a8" stroke-width="0.6"/><path d="M586 730l1.8 4M592.8 729.4l-2 4.6M589.4 728l0 6" stroke="#b84838" stroke-width="1.6"/><circle cx="586" cy="729.4" r="1.3" fill="#38a838"/><circle cx="592.8" cy="729" r="1.3" fill="#d8b020"/><circle cx="589.4" cy="727.6" r="1.3" fill="#d04040"/><rect x="587.4" y="736.6" width="3.4" height="3" fill="#d04848"/>
<rect x="93" y="725" width="1.6" height="1.6" fill="#8db8f4"/>
<rect x="95" y="729" width="1.6" height="1.6" fill="#8db8f4"/>
<rect x="93" y="733" width="1.6" height="1.6" fill="#8db8f4"/>
<rect x="95" y="737" width="1.6" height="1.6" fill="#8db8f4"/>
<rect x="93" y="741" width="1.6" height="1.6" fill="#8db8f4"/>
<rect x="862" y="725" width="1.6" height="1.6" fill="#8db8f4"/>
<rect x="864" y="729" width="1.6" height="1.6" fill="#8db8f4"/>
<rect x="862" y="733" width="1.6" height="1.6" fill="#8db8f4"/>
<rect x="864" y="737" width="1.6" height="1.6" fill="#8db8f4"/>
<rect x="862" y="741" width="1.6" height="1.6" fill="#8db8f4"/>
<circle cx="909.4" cy="735" r="7.6" fill="#e8f0fc" stroke="#7fa6e8" stroke-width="1.2"/><circle cx="909.4" cy="735" r="6" fill="#f6f9ff" stroke="#c8d8f4" stroke-width="0.6"/><path d="M911.6 731.4l-4 3.6 4 3.6" fill="none" stroke="#283a6c" stroke-width="1.7"/>
<rect x="926.6" y="727.6" width="8.6" height="7.6" fill="#46484c" stroke="#8a8c90" stroke-width="0.8"/><rect x="921" y="731" width="8.6" height="7.6" fill="#5a5c60" stroke="#a4a6aa" stroke-width="0.8"/><rect x="923.4" y="739.4" width="4" height="1.6" fill="#707478"/>
<circle cx="945.6" cy="735" r="6.2" fill="#7cc032" stroke="#d4eeb0" stroke-width="1.3"/><circle cx="945.6" cy="735" r="2.8" fill="#3e8c14"/>
</svg>
</body></html>
